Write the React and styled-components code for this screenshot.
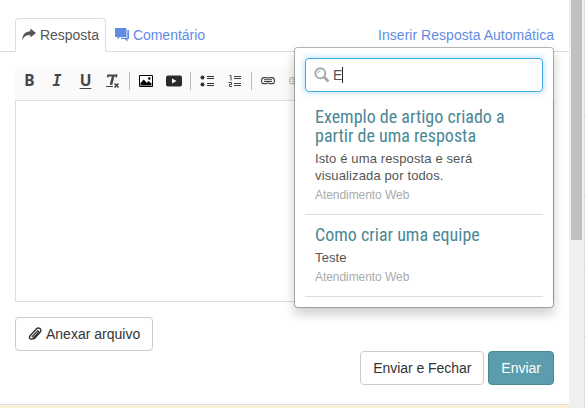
import React from "react";
import styled, { createGlobalStyle } from "styled-components";

const Global = createGlobalStyle`
  * { box-sizing: border-box; }
  body {
    margin: 0;
    overflow: hidden;
    background: #fff;
    color: #555;
    font: 14px/20px "Liberation Sans", Arial, sans-serif;
  }
`;

const Page = styled.div`
  display: grid;
  grid-template-columns: 569px 15px 2px;
  width: 586px;
  height: 408px;
  overflow: hidden;
`;

const Main = styled.main`
  display: flex;
  flex-direction: column;
  min-width: 0;
`;

const TabBar = styled.nav`
  display: flex;
  align-items: flex-end;
  height: 52px;
  padding: 0 15px;
  border-bottom: 1px solid #ddd;
`;

const Tab = styled.a`
  display: flex;
  align-items: center;
  gap: 4px;
  height: 34px;
  margin-bottom: -1px;
  padding: 0 6px;
  border: 1px solid ${(p) => (p.$active ? "#ddd" : "transparent")};
  border-bottom-color: ${(p) => (p.$active ? "#fff" : "transparent")};
  border-radius: 4px 4px 0 0;
  color: ${(p) => (p.$active ? "#555" : "#628ce2")};
  letter-spacing: -0.03px;
  margin-right: 2px;
  white-space: nowrap;
`;

const Canned = styled.div`
  position: relative;
  margin-left: auto;
  height: 34px;
  line-height: 34px;
  margin-bottom: -1px;
  color: #628ce2;
  letter-spacing: 0.03px;
  white-space: nowrap;
`;

const Menu = styled.div`
  position: absolute;
  z-index: 2;
  top: 29px;
  right: 0;
  width: 260px;
  height: 261px;
  padding: 10px;
  border: 1px solid rgba(0, 0, 0, 0.27);
  border-radius: 4px;
  background: #fff;
  background-clip: padding-box;
  box-shadow: 0 6px 12px rgba(0, 0, 0, 0.2);
  color: #555;
  letter-spacing: 0;
  white-space: normal;
  line-height: 20px;
`;

const Search = styled.label`
  display: flex;
  align-items: center;
  height: 34px;
  padding: 0 8px;
  border: 1px solid #3fabe2;
  border-radius: 4px;
  box-shadow: 0 0 6px rgba(82, 180, 236, 0.5);
`;

const Query = styled.span`
  margin-left: 3px;
`;

const Caret = styled.span`
  width: 1px;
  height: 16px;
  background: #222;
`;

const Article = styled.article`
  padding: ${(p) => (p.$first ? "15px" : "10px")} 10px 10px;
  border-bottom: 1px solid #ddd;
`;

const Title = styled.h4`
  margin: 0;
  color: #4c8795;
  font: 400 18px/19px "Roboto Condensed", Roboto, sans-serif;
  font-stretch: 75%;
`;

const Excerpt = styled.p`
  margin: 5px 0 0;
  font-size: 13px;
  letter-spacing: 0.13px;
  line-height: 17px;
`;

const Source = styled.small`
  display: block;
  margin-top: 3px;
  color: #aaa;
  font-size: 12px;
  letter-spacing: -0.06px;
  line-height: 17px;
`;

const Editor = styled.section`
  margin: 15px 15px 0;
`;

const Toolbar = styled.div`
  display: flex;
  align-items: center;
  height: 33px;
  padding-bottom: 6px;
  background: #fafafa;
  color: #474747;
`;

const Tool = styled.span`
  display: flex;
  flex: none;
  align-items: center;
  justify-content: center;
  width: 28px;
  height: 28px;
  opacity: ${(p) => (p.$disabled ? 0.35 : 1)};
`;

const Letter = styled.span`
  margin-top: ${(p) => (p.$italic ? "1px" : "-1px")};
  padding-left: ${(p) => (p.$italic ? "0" : "1px")};
  font-family: ${(p) => (p.$italic ? '"DejaVu Sans Mono"' : '"Noto Sans"')}, sans-serif;
  font-size: ${(p) => (p.$italic ? 15 : 15.5)}px;
  font-style: ${(p) => (p.$italic ? "italic" : "normal")};
  font-weight: 700;
  line-height: 20px;
  text-decoration: ${(p) => (p.$underline ? "underline" : "none")};
  text-decoration-thickness: 1px;
  text-underline-offset: 2px;
`;

const Separator = styled.span`
  flex: none;
  width: 1px;
  height: 18px;
  margin: 0 2px;
  background: #bbb;
`;

const TextArea = styled.div`
  height: 202px;
  border: 1px solid #ddd;
`;

const Button = styled.button`
  display: inline-flex;
  align-items: center;
  gap: 4px;
  height: 34px;
  padding: 0 12px;
  border: 1px solid ${(p) => (p.$primary ? "#4c8795" : "#ccc")};
  border-radius: 4px;
  background: ${(p) => (p.$primary ? "#5c9dad" : "#fff")};
  color: ${(p) => (p.$primary ? "#fff" : "#333")};
  font: inherit;
  letter-spacing: ${(p) => (p.$tight ? "-0.05px" : "0")};
  white-space: nowrap;
`;

const Attachments = styled.div`
  display: flex;
  margin: 15px 15px 0;
`;

const Actions = styled.div`
  display: flex;
  justify-content: flex-end;
  gap: 4px;
  padding: 0 15px;
`;

const Notice = styled.footer`
  height: 4px;
  margin-top: auto;
  border-top: 1px solid #ddd;
  background: #fdf0d9;
`;

const Scrollbar = styled.div`
  padding: 0 2px;
  background: #f0f0f0;
`;

const Thumb = styled.div`
  height: 240px;
  background: #c1c1c1;
`;

const Sidebar = styled.aside`
  padding-top: 116px;
  border-left: 1px solid #ddd;
`;

const SideRow = styled.div`
  height: ${(p) => p.$height}px;
  border-top: 1px solid #ddd;
`;

const Icon = styled.svg`
  display: block;
  flex: none;
`;

const ShareIcon = () => (
  <Icon width="14" height="14" viewBox="0 0 14 14" fill="#555">
    <path d="M8.3 .6 14 5 8.300 9.600V7C4.300 6.900 1.800 8.300.3 12 .3 6.800 3.400 3.500 8.300 3.300Z" />
  </Icon>
);

const CommentsIcon = () => (
  <Icon width="14" height="14" viewBox="0 0 14 14" fill="#628ce2">
    <path d="M.5 0h11v9H5L2.500 11.500V9H.5q-.5 0-.5-.5V.5Q0 0 .5 0Z" />
    <path d="M12.300 2h1.200q.5 0 .5.500v8q0 .5-.5.500H12.500v2.500L9.500 11H6V9.800h6.300Z" />
  </Icon>
);

const SearchIcon = () => (
  <Icon width="16" height="16" viewBox="0 0 16 16" fill="none" stroke="#aaa">
    <circle cx="6.300" cy="6.300" r="5" strokeWidth="1.900" />
    <path d="M3.700 6.500A2.800 2.800 0 0 1 6.500 3.700" strokeWidth="1" />
    <path d="m10.300 10.300 4.200 4.200" strokeWidth="3" />
  </Icon>
);

const ClearFormatIcon = () => (
  <Icon width="16" height="16" viewBox="0 0 16 16" fill="none" stroke="#474747">
    <path d="M3 2.500H12" strokeWidth="2" />
    <path d="M8.200 3 6 11.700" strokeWidth="2.600" />
    <path d="M3.200 1.500 2.600 4.500M11.800 1.500l-.5 3" strokeWidth="1.400" />
    <path d="M1 13.500h7" strokeWidth="1" />
    <path d="m9.500 10.500 4 4m0-4-4 4" strokeWidth="1.700" />
  </Icon>
);

const ImageIcon = () => (
  <Icon width="14" height="12" viewBox="0 0 14 12">
    <path d="M.5.500h13v11H.5Z" fill="#fff" stroke="#000" />
    <path d="M1.500 10.500V8l3.200-3.500 3 3.200L9.500 6l3 2.500v2Z" fill="#000" />
    <circle cx="10.300" cy="3.500" r="1.300" fill="#000" />
  </Icon>
);

const VideoIcon = () => (
  <Icon width="16" height="12" viewBox="0 0 16 12">
    <rect y=".5" width="16" height="11" rx="2" fill="#2a2a2a" />
    <path d="M6 3.500v5L10.500 6Z" fill="#fff" />
  </Icon>
);

const BulletsIcon = () => (
  <Icon width="14" height="14" viewBox="0 0 14 14" fill="#333">
    <circle cx="2.500" cy="3.500" r="2" />
    <circle cx="2.500" cy="10.500" r="2" />
    <path d="M7 2h7v1H7ZM7 4h7v1H7ZM7 9h7v1H7ZM7 11h7v1H7Z" />
  </Icon>
);

const NumbersIcon = () => (
  <Icon width="14" height="14" viewBox="0 0 14 14" fill="none" stroke="#444">
    <path d="M1.500 1.500H3v5M.5 8.500h3v2h-2v2H4" />
    <path d="M6 2.500h7M6 4.500h7M6 9.500h7M6 11.500h7" />
  </Icon>
);

const LinkIcon = () => (
  <Icon width="14" height="8" viewBox="0 0 14 8" fill="none" stroke="#444">
    <path d="M6.500 1.500V1Q6.300.600 5.500.600H3A2.500 2.500 0 0 0 .6 3V4.500A2.500 2.500 0 0 0 3 6.700H5.500Q6.400 6.700 6.500 5.500M7.500 1.500Q7.600.600 8.500.600H11A2.500 2.500 0 0 1 13.400 3V4.500A2.500 2.500 0 0 1 11 6.700H8.500Q7.600 6.700 7.500 5.500" strokeWidth="1.200" />
    <path d="M3 2.700h8M3 4.500h8" strokeWidth="1" />
  </Icon>
);

const ClipIcon = () => (
  <Icon width="14" height="14" viewBox="0 0 14 14" fill="none" stroke="#333" strokeWidth="1.400" strokeLinecap="round">
    <path d="M4.200 9.600 9 4.400q.8-.8 1.400-.2t-.1 1.400l-5.400 5.900q-1.400 1.400-2.800.3-1.400-1.300 0-3L8.300 2q1.900-1.900 3.700-.5 1.800 1.700.1 3.800L6.200 11.700" />
  </Icon>
);

const articles = [
  { title: "Exemplo de artigo criado a partir de uma resposta", text: "Isto é uma resposta e será visualizada por todos." },
  { title: "Como criar uma equipe", text: "Teste" },
];

export default function App() {
  return (
    <Page>
      <Global />
      <Main>
        <TabBar>
          <Tab $active><ShareIcon />Resposta</Tab>
          <Tab><CommentsIcon />Comentário</Tab>
          <Canned>
            Inserir Resposta Automática
            <Menu>
              <Search><SearchIcon /><Query>E</Query><Caret /></Search>
              {articles.map((a, i) => (
                <Article key={a.title} $first={i === 0}>
                  <Title>{a.title}</Title>
                  <Excerpt>{a.text}</Excerpt>
                  <Source>Atendimento Web</Source>
                </Article>
              ))}
            </Menu>
          </Canned>
        </TabBar>
        <Editor>
          <Toolbar>
            <Tool><Letter>B</Letter></Tool>
            <Tool><Letter $italic>I</Letter></Tool>
            <Tool><Letter $underline>U</Letter></Tool>
            <Tool><ClearFormatIcon /></Tool>
            <Separator />
            <Tool><ImageIcon /></Tool>
            <Tool><VideoIcon /></Tool>
            <Separator />
            <Tool><BulletsIcon /></Tool>
            <Tool><NumbersIcon /></Tool>
            <Separator />
            <Tool><LinkIcon /></Tool>
            <Tool $disabled><LinkIcon /></Tool>
          </Toolbar>
          <TextArea />
        </Editor>
        <Attachments>
          <Button><ClipIcon />Anexar arquivo</Button>
        </Attachments>
        <Actions>
          <Button $tight>Enviar e Fechar</Button>
          <Button $primary>Enviar</Button>
        </Actions>
        <Notice />
      </Main>
      <Scrollbar><Thumb /></Scrollbar>
      <Sidebar>
        <SideRow $height={80} />
        <SideRow $height={70} />
        <SideRow $height={70} />
        <SideRow $height={70} />
      </Sidebar>
    </Page>
  );
}
